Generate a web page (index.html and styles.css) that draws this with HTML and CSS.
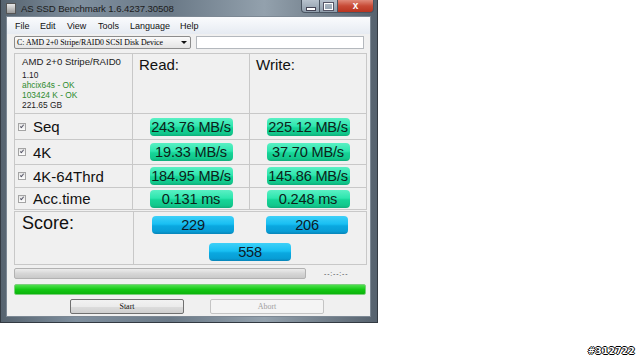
FILE: index.html
```html
<!DOCTYPE html>
<html lang="en">
  <head>
    <meta charset="UTF-8" />
    <title>AS SSD Benchmark</title>
    <link rel="stylesheet" href="styles.css">
  </head>
  <body>
    <div class="window">
      <div class="titlebar">
        <div class="app-icon"></div>
        <div class="title">AS SSD Benchmark 1.6.4237.30508</div>
        <div class="controls">
          <div class="ctl min"><span></span></div>
          <div class="ctl max"><span></span></div>
          <div class="ctl close">x</div>
        </div>
      </div>

      <div class="client">
        <div class="menubar">
          <div>File</div>
          <div>Edit</div>
          <div>View</div>
          <div>Tools</div>
          <div>Language</div>
          <div>Help</div>
        </div>

        <div class="content">
          <div class="drive-row">
            <div class="combo">
              <span>C: AMD 2+0 Stripe/RAID0 SCSI Disk Device</span>
              <span class="arrow"></span>
            </div>
            <div class="textbox"></div>
          </div>

          <div class="results">
            <div class="cell info">
              <div class="drive-name">AMD 2+0 Stripe/RAID0</div>
              <div>1.10</div>
              <div class="ok">ahcix64s - OK</div>
              <div class="ok">103424 K - OK</div>
              <div>221.65 GB</div>
            </div>
            <div class="cell head">Read:</div>
            <div class="cell head">Write:</div>

            <div class="cell label"><span class="check"></span>Seq</div>
            <div class="cell val"><div class="pill">243.76 MB/s</div></div>
            <div class="cell val"><div class="pill">225.12 MB/s</div></div>

            <div class="cell label"><span class="check"></span>4K</div>
            <div class="cell val"><div class="pill">19.33 MB/s</div></div>
            <div class="cell val"><div class="pill">37.70 MB/s</div></div>

            <div class="cell label"><span class="check"></span>4K-64Thrd</div>
            <div class="cell val"><div class="pill">184.95 MB/s</div></div>
            <div class="cell val"><div class="pill">145.86 MB/s</div></div>

            <div class="cell label"><span class="check"></span>Acc.time</div>
            <div class="cell val"><div class="pill">0.131 ms</div></div>
            <div class="cell val"><div class="pill">0.248 ms</div></div>
          </div>

          <div class="score">
            <div class="cell score-label">Score:</div>
            <div class="cell score-vals">
              <div class="pill blue">229</div>
              <div class="pill blue">206</div>
              <div class="pill blue total">558</div>
            </div>
          </div>

          <div class="progress-row">
            <div class="progress"></div>
            <div class="time">--:--:--</div>
          </div>

          <div class="green-bar"></div>

          <div class="buttons">
            <div class="btn">Start</div>
            <div class="btn disabled">Abort</div>
          </div>
        </div>
      </div>
    </div>

    <div class="tag">#312722</div>
  </body>
</html>
```

FILE: styles.css
```css
body {
  margin: 0;
  padding: 0;
  width: 640px;
  height: 360px;
  background: #fff;
  position: relative;
  overflow: hidden;
  font-family: "Liberation Sans", Arial, sans-serif;
}

.window {
  box-sizing: border-box;
  width: 378px;
  height: 323px;
  padding: 0 6px 5px 5px;
  background: linear-gradient(90deg, #56636f 0%, #7f8f9e 20%, #6a7987 45%, #93a1ad 70%, #56626e 100%);
  border: 1px solid #333a42;
  border-top: none;
  display: flex;
  flex-direction: column;
}

.titlebar {
  height: 16px;
  display: flex;
  align-items: center;
  position: relative;
}
.app-icon {
  width: 8px;
  height: 9px;
  margin: 0 5px 0 0;
  background: linear-gradient(#e8e8e8, #9a9a9a);
  border: 1px solid #555;
}
.title {
  font-size: 9.6px;
  color: #1c1c1c;
  letter-spacing: -0.1px;
}
.controls {
  margin-left: auto;
  display: flex;
  align-self: flex-start;
  margin-right: -3px;
}
.ctl {
  height: 13px;
  box-sizing: border-box;
  border: 1px solid #4a5562;
  border-top: none;
  background: linear-gradient(#b7c2cd, #8e9caa);
  display: flex;
  justify-content: center;
  align-items: center;
}
.ctl.min {
  width: 19px;
  border-radius: 0 0 0 4px;
}
.ctl.min > span {
  width: 8px;
  height: 2px;
  margin-top: 5px;
  background: #fff;
  border: 1px solid #445;
}
.ctl.max {
  width: 18px;
  border-left: none;
}
.ctl.max > span {
  width: 7px;
  height: 5px;
  border: 1px solid #fff;
  outline: 1px solid #556;
}
.ctl.close {
  width: 36px;
  border-left: none;
  border-radius: 0 0 4px 0;
  background: linear-gradient(#e08a7a, #c84a36 50%, #b83420);
  color: #fff;
  font-size: 10px;
  font-weight: bold;
  line-height: 1;
}

.client {
  flex: 1;
  background: #f0f0f0;
  border: 1px solid #7c8894;
  display: flex;
  flex-direction: column;
}

.menubar {
  height: 17px;
  display: grid;
  grid-template-columns: 25px 27px 31px 32px 50px auto;
  padding-left: 8px;
  align-items: center;
  font-size: 9px;
  color: #111;
  background: linear-gradient(#fafbfd, #e6ebf2);
}

.content {
  padding: 2px 6px 0 7px;
  display: flex;
  flex-direction: column;
}

.drive-row {
  display: flex;
  gap: 5px;
  height: 13px;
}
.combo {
  box-sizing: border-box;
  width: 178px;
  height: 13px;
  border: 1px solid #8c8c8c;
  border-radius: 2px;
  background: linear-gradient(#fafafa, #e4e4e4);
  font-family: "Liberation Serif", "Times New Roman", serif;
  font-size: 7.8px;
  padding: 0 0 0 2px;
  display: flex;
  align-items: center;
  white-space: nowrap;
  overflow: hidden;
}
.combo .arrow {
  margin-left: auto;
  margin-right: 3px;
  width: 0;
  height: 0;
  border-left: 3px solid transparent;
  border-right: 3px solid transparent;
  border-top: 3px solid #111;
}
.textbox {
  box-sizing: border-box;
  width: 169px;
  height: 13px;
  background: #fff;
  border: 1px solid #b4b8bd;
}

.results {
  margin-top: 4px;
  display: grid;
  grid-template-columns: 117px 116px 116px;
  grid-template-rows: 59px 25px 24px 22px 21px;
  gap: 1px;
  border: 1px solid #c8c8c8;
  background: #c8c8c8;
  width: 351px;
}
.cell {
  background: #f0f0f0;
}
.info {
  padding: 3px 0 0 7px;
  font-size: 8.4px;
  line-height: 10px;
  color: #222;
}
.info .drive-name {
  font-size: 9.6px;
  margin-bottom: 3px;
}
.info .ok {
  color: #2e8b2e;
}
.head {
  font-size: 15px;
  padding: 2px 0 0 6px;
  color: #111;
}
.label {
  display: flex;
  align-items: center;
  font-size: 15px;
  color: #111;
  padding-left: 3px;
}
.check {
  box-sizing: border-box;
  width: 8px;
  height: 8px;
  border: 1px solid #a4a4a4;
  background: linear-gradient(#e4e4e4, #fdfdfd);
  margin-right: 7px;
  position: relative;
}
.check::after {
  content: "";
  position: absolute;
  left: 2px;
  top: 0px;
  width: 1px;
  height: 3px;
  border: solid #556;
  border-width: 0 1px 1px 0;
  transform: rotate(40deg);
}
.val {
  display: flex;
  justify-content: center;
  align-items: center;
}

.pill {
  width: 83px;
  height: 18px;
  border-radius: 4px;
  background: linear-gradient(#5af0c4, #2ee6ae 45%, #16d497 55%, #12c88c 85%, #0fae7b);
  color: #0c2219;
  font-size: 14.6px;
  line-height: 19px;
  text-align: center;
  white-space: nowrap;
  letter-spacing: -0.2px;
}
.pill.blue {
  background: linear-gradient(#3ed0f8, #18bff2 45%, #0aa8e0 55%, #089ed6 85%, #0784b8);
  color: #0c1a28;
  width: 82px;
}

.score {
  margin-top: 1px;
  display: grid;
  grid-template-columns: 118px 232px;
  height: 52px;
  gap: 1px;
  border: 1px solid #c8c8c8;
  background: #c8c8c8;
  width: 351px;
}
.score-label {
  font-size: 18px;
  padding: 1px 0 0 7px;
  color: #111;
}
.score-vals {
  display: grid;
  grid-template-columns: 1fr 1fr;
  row-gap: 6px;
  padding: 4px 0 0 18px;
  box-sizing: border-box;
}
.score-vals .total {
  grid-column: span 2;
  justify-self: center;
  margin-left: -18px;
}
.score-vals > .pill:nth-child(2) {
  margin-left: 7px;
}

.progress-row {
  margin-top: 2px;
  display: flex;
  align-items: center;
  height: 12px;
}
.progress {
  box-sizing: border-box;
  width: 292px;
  height: 11px;
  border: 1px solid #b2b2b2;
  border-radius: 2px;
  background: linear-gradient(#ececec, #d6d6d6 50%, #c9c9c9);
}
.time {
  margin-left: 18px;
  font-size: 7px;
  color: #444;
  letter-spacing: 0.8px;
}

.green-bar {
  margin-top: 5px;
  box-sizing: border-box;
  width: 352px;
  height: 11px;
  border: 1px solid #7ccf7c;
  border-radius: 2px;
  background: linear-gradient(#4ee04e, #14c814 50%, #0cb40c);
}

.buttons {
  margin-top: 4px;
  display: flex;
  padding-left: 56px;
  gap: 26px;
}
.btn {
  box-sizing: border-box;
  width: 114px;
  height: 15px;
  border: 1px solid #707070;
  border-radius: 2px;
  background: linear-gradient(#f2f2f2, #ebebeb 50%, #dddddd 51%, #cfcfcf);
  font-family: "Liberation Serif", "Times New Roman", serif;
  font-size: 8px;
  display: flex;
  justify-content: center;
  align-items: center;
  color: #111;
}
.btn.disabled {
  border-color: #c4c4c4;
  background: #f4f4f4;
  color: #a0a0a0;
}

.tag {
  position: absolute;
  right: 5px;
  bottom: 4px;
  font-family: "DejaVu Sans", sans-serif;
  font-size: 9px;
  font-weight: bold;
  letter-spacing: 0.3px;
  color: #fff;
  text-shadow: -1px 0 #000, 1px 0 #000, 0 -1px #000, 0 1px #000;
}
```
